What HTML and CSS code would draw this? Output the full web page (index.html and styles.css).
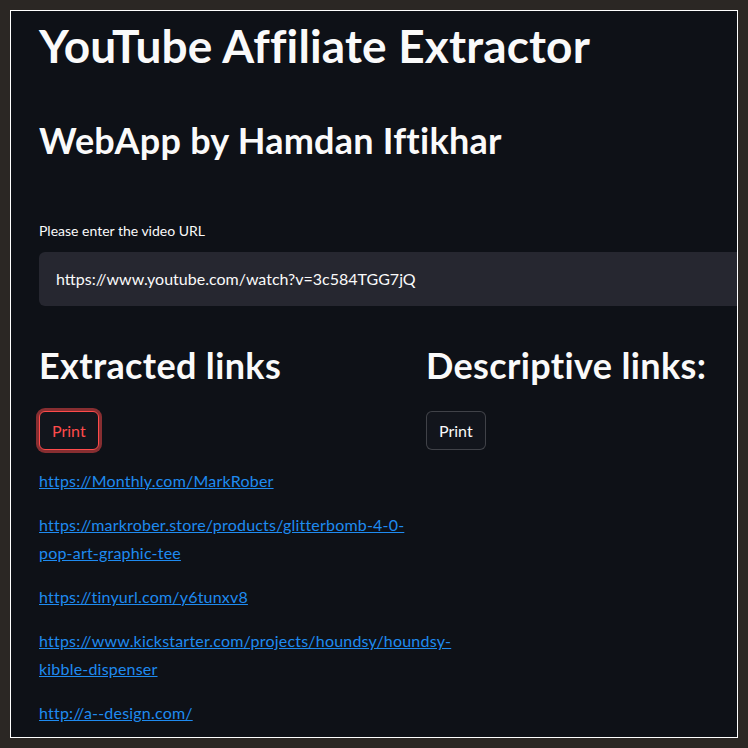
FILE: index.html
```html
<!DOCTYPE html>
<html lang="en">
<head>
<meta charset="utf-8">
<title>YouTube Affiliate Extractor</title>
<link rel="stylesheet" href="styles.css">
</head>
<body>
<div class="frame">
  <main class="app">
    <h1 class="title">YouTube Affiliate Extractor</h1>
    <h2 class="subtitle">WebApp by Hamdan Iftikhar</h2>
    <div class="field">
      <label class="field-label" for="url">Please enter the video URL</label>
      <input class="field-input" id="url" type="text" value="https://www.youtube.com/watch?v=3c584TGG7jQ">
    </div>
    <div class="cols">
      <section class="col">
        <h3 class="col-title">Extracted links</h3>
        <div class="btn-row"><button class="btn btn-focus">Print</button></div>
        <div class="links">
          <p class="link-p"><a href="#">https://Monthly.com/MarkRober</a></p>
          <p class="link-p"><a href="#">https://markrober.store/products/glitterbomb-4-0-<br>pop-art-graphic-tee</a></p>
          <p class="link-p"><a href="#">https://tinyurl.com/y6tunxv8</a></p>
          <p class="link-p"><a href="#">https://www.kickstarter.com/projects/houndsy/houndsy-<br>kibble-dispenser</a></p>
          <p class="link-p"><a href="#">http://a--design.com/</a></p>
        </div>
      </section>
      <section class="col">
        <h3 class="col-title">Descriptive links:</h3>
        <div class="btn-row"><button class="btn">Print</button></div>
      </section>
    </div>
  </main>
</div>
</body>
</html>
```

FILE: styles.css
```css
* { box-sizing: border-box; }
html, body { margin: 0; padding: 0; }
body {
  background: #2b2724;
  padding: 10px;
  font-family: Lato, "Source Sans Pro", "Noto Sans", sans-serif;
  color: #fafafa;
}
.frame {
  width: 728px;
  height: 728px;
  border: 1px solid #ffffff;
  background: #0e1117;
  overflow: hidden;
  padding: 7px 0 0 28px;
}
.app {
  width: 758px;
  display: flex;
  flex-direction: column;
}
.title {
  margin: 0;
  font-size: 46px;
  line-height: 55.2px;
  font-weight: 700;
  letter-spacing: 0.15px;
  white-space: nowrap;
}
.subtitle {
  margin: 45.6px 0 0;
  font-size: 36px;
  line-height: 43.2px;
  font-weight: 700;
  letter-spacing: 0.25px;
  white-space: nowrap;
}
.field {
  margin-top: 61.2px;
  display: flex;
  flex-direction: column;
  gap: 12px;
}
.field-label {
  font-size: 14px;
  line-height: 16.8px;
}
.field-input {
  width: 100%;
  height: 54px;
  border: none;
  border-radius: 6px;
  background: #262730;
  color: #fafafa;
  font-family: inherit;
  font-size: 16px;
  padding: 0 17px;
  outline: none;
}
.cols {
  margin-top: 38.5px;
  display: grid;
  grid-template-columns: 371px 371px;
  column-gap: 16px;
}
.col { display: flex; flex-direction: column; }
.col-title {
  margin: 0;
  font-size: 36px;
  line-height: 43.2px;
  font-weight: 700;
  letter-spacing: 0.35px;
  white-space: nowrap;
}
.btn-row { margin-top: 23.3px; display: flex; }
.btn {
  height: 39px;
  padding: 0 12px;
  border: 1px solid rgba(250, 250, 250, 0.2);
  border-radius: 6px;
  background: #12151c;
  color: #fafafa;
  font-family: inherit;
  font-size: 16px;
}
.btn-focus {
  border-color: #ff4b4b;
  color: #ff4b4b;
  box-shadow: 0 0 0 3px rgba(255, 75, 75, 0.5);
}
.links {
  margin-top: 16.8px;
  display: flex;
  flex-direction: column;
  gap: 16px;
}
.link-p {
  margin: 0;
  font-size: 16px;
  line-height: 28px;
  letter-spacing: 0.2px;
  white-space: nowrap;
}
.link-p a { color: #1f8bf0; text-decoration: underline; }
```
